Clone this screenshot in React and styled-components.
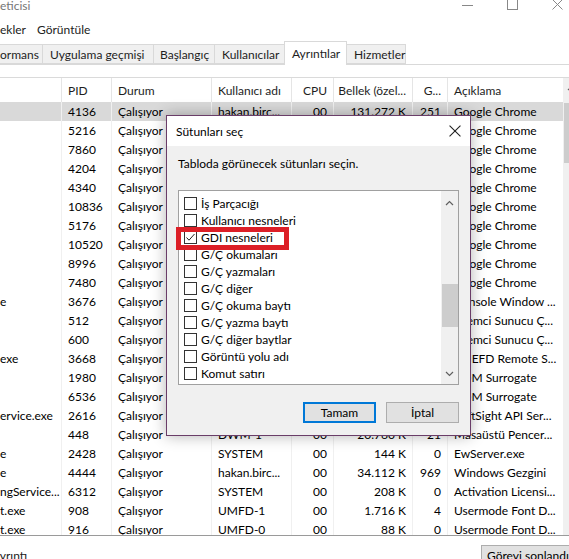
import React from 'react'
import styled, { createGlobalStyle } from 'styled-components'

const PageStyle = createGlobalStyle`
  html, body {
    margin: 0;
    padding: 0;
    background: #fff;
  }
  body {
    font-family: Lato, 'Noto Sans', sans-serif;
    font-size: 12px;
    color: #000;
    overflow: hidden;
  }
`

const Window = styled.div`
  position: relative;
  width: 569px;
  height: 559px;
  overflow: hidden;
  background: #fff;
  display: flex;
  flex-direction: column;
  & > * {
    flex-shrink: 0;
  }
`

const TitleBar = styled.div`
  height: 12px;
  display: flex;
  align-items: center;
  justify-content: space-between;
`
const Title = styled.span`
  color: #767676;
  line-height: 12px;
  margin-top: -1px;
`
const Controls = styled.div`
  display: flex;
  align-items: center;
  height: 12px;
  margin-top: -3px;
  margin-right: 6px;
  gap: 34px;
`

const MenuBar = styled.div`
  height: 29px;
  display: flex;
  align-items: flex-end;
  gap: 11px;
  padding-bottom: 3px;
  box-sizing: border-box;
`
const MenuItem = styled.span`
  line-height: 16px;
  color: #222;
`

const TabBar = styled.div`
  height: 24px;
  display: flex;
  align-items: flex-end;
  border-bottom: 1px solid #d9d9d9;
  box-sizing: border-box;
  margin-left: -1px;
`
const Tab = styled.div`
  width: ${(p) => p.w}px;
  box-sizing: border-box;
  height: ${(p) => (p.active ? 24 : 20)}px;
  margin-bottom: ${(p) => (p.active ? -1 : 0)}px;
  padding: 0 0 0 ${(p) => p.pad || 7}px;
  display: flex;
  align-items: center;
  background: ${(p) => (p.active ? '#fff' : '#f0f0f0')};
  border: 1px solid #d9d9d9;
  border-bottom: ${(p) => (p.active ? 'none' : '1px solid #d9d9d9')};
  margin-left: -1px;
  color: #1e1e1e;
  white-space: nowrap;
  position: ${(p) => (p.active ? 'relative' : 'static')};
  z-index: ${(p) => (p.active ? 1 : 0)};
`

const TableWrap = styled.div`
  margin-top: 12px;
  display: flex;
  border-top: 1px solid #dadada;
  border-bottom: 1px solid #9a9a9a;
  height: 457px;
  box-sizing: content-box;
`
const Table = styled.div`
  width: 563px;
  flex: 0 0 563px;
  display: flex;
  flex-direction: column;
  overflow: hidden;
`
const cols = '62px 50px 100px 80px 42px 79px 35px 1fr'

const HeaderRow = styled.div`
  display: grid;
  grid-template-columns: ${cols};
  height: 24px;
  flex: 0 0 24px;
`
const HeadCell = styled.div`
  display: flex;
  align-items: center;
  justify-content: ${(p) => (p.right ? 'flex-end' : 'flex-start')};
  padding: 0 ${(p) => (p.right ? 6 : 0)}px 0 ${(p) => (p.right ? 0 : 6)}px;
  border-right: 1px solid #e5e5e5;
  color: #1e1e1e;
  white-space: nowrap;
  overflow: hidden;
  &:last-child {
    border-right: none;
  }
`
const Row = styled.div`
  display: grid;
  grid-template-columns: ${cols};
  height: 19px;
  flex: 0 0 19px;
  background: ${(p) => (p.selected ? '#d9d9d9' : 'transparent')};
`
const Cell = styled.div`
  display: flex;
  align-items: center;
  justify-content: ${(p) => (p.right ? 'flex-end' : 'flex-start')};
  padding: 0 ${(p) => (p.right ? 6 : 0)}px 0 ${(p) => (p.right ? 0 : p.first ? 0 : 6)}px;
  border-right: 1px solid #f0f0f0;
  white-space: nowrap;
  overflow: hidden;
  &:last-child {
    border-right: none;
  }
`

const ScrollTrack = styled.div`
  width: 17px;
  flex: 0 0 17px;
  background: #f0f0f0;
  display: flex;
  flex-direction: column;
  align-items: center;
`
const ScrollArrow = styled.div`
  height: ${(p) => p.h || 17}px;
  flex: 0 0 ${(p) => p.h || 17}px;
  width: 17px;
  display: flex;
  align-items: center;
  justify-content: center;
`
const ScrollThumb = styled.div`
  width: ${(p) => p.w || 15}px;
  height: ${(p) => p.h}px;
  flex: 0 0 ${(p) => p.h}px;
  margin-top: ${(p) => p.top}px;
  background: #cdcdcd;
`
const ScrollGap = styled.div`
  flex: 1;
`

const Footer = styled.div`
  height: 23px;
  overflow: hidden;
  display: flex;
  justify-content: space-between;
  align-items: flex-start;
  padding-top: 9px;
  box-sizing: border-box;
`
const LessDetail = styled.span`
  margin-left: -6px;
  margin-top: 3px;
  line-height: 16px;
  color: #222;
`
const Button = styled.button`
  font-family: inherit;
  font-size: 12px;
  color: #000;
  height: 21px;
  width: ${(p) => p.w}px;
  padding: 0;
  background: #e1e1e1;
  border: ${(p) => (p.focused ? '2px solid #0078d7' : '1px solid #adadad')};
  box-sizing: border-box;
  text-align: ${(p) => (p.left ? 'left' : 'center')};
  padding-left: ${(p) => (p.left ? 5 : 0)}px;
  flex-shrink: 0;
`
const EndTaskButton = styled(Button)`
  margin-right: -12px;
`

/* dialog */
const Dialog = styled.div`
  position: absolute;
  left: 166px;
  top: 115px;
  width: 305px;
  height: 321px;
  box-sizing: border-box;
  border: 1px solid #6a3d68;
  background: #f0f0f0;
  box-shadow: 0 0 14px rgba(0, 0, 0, 0.3);
  display: flex;
  flex-direction: column;
`
const DialogTitle = styled.div`
  height: 30px;
  flex: 0 0 30px;
  background: #fff;
  display: flex;
  align-items: center;
  justify-content: space-between;
  padding: 0 9px 0 9px;
`
const DialogBody = styled.div`
  padding: 10px 11px 0 11px;
  display: flex;
  flex-direction: column;
`
const Prompt = styled.div`
  line-height: 16px;
  color: #000;
`
const ListBox = styled.div`
  margin-top: 18px;
  height: 195px;
  border: 1px solid #a0a0a0;
  box-sizing: border-box;
  background: #fff;
  display: flex;
  overflow: hidden;
`
const ListItems = styled.div`
  flex: 1;
  padding: 4px 0 0 5px;
`
const Item = styled.div`
  height: 17px;
  display: flex;
  align-items: center;
  gap: 4px;
  white-space: nowrap;
`
const Box = styled.span`
  width: 13px;
  height: 13px;
  box-sizing: border-box;
  border: 1px solid #333;
  background: #fff;
  display: inline-flex;
  align-items: center;
  justify-content: center;
  flex-shrink: 0;
`
const ButtonRow = styled.div`
  margin-top: 17px;
  display: flex;
  justify-content: flex-end;
  gap: 10px;
`
const Highlight = styled.div`
  position: absolute;
  left: 9px;
  top: 111px;
  width: 113px;
  height: 23px;
  box-sizing: border-box;
  border: 5px solid #dc1f27;
`

const Chevron = ({ down }) => (
  <svg width='9' height='6' viewBox='0 0 9 6'>
    <path d={down ? 'M1 1 L4.5 4.5 L8 1' : 'M1 5 L4.5 1.5 L8 5'} fill='none' stroke='#606060' strokeWidth='1.2' />
  </svg>
)

const Check = () => (
  <svg width='11' height='11' viewBox='0 0 11 11'>
    <path d='M1.5 5.5 L4 8.2 L9.5 2' fill='none' stroke='#222' strokeWidth='1' />
  </svg>
)

const CloseX = ({ size = 11, color = '#333' }) => (
  <svg width={size} height={size} viewBox='0 0 11 11'>
    <path d='M0.5 0.5 L10.5 10.5 M10.5 0.5 L0.5 10.5' stroke={color} strokeWidth='1' />
  </svg>
)

const rows = [
  ['', '4136', 'hakan.birc...', '00', '131.272 K', '251', 'Google Chrome'],
  ['', '5216', 'hakan.birc...', '00', '52.180 K', '12', 'Google Chrome'],
  ['', '7860', 'hakan.birc...', '00', '3.412 K', '8', 'Google Chrome'],
  ['', '4204', 'hakan.birc...', '00', '88.904 K', '34', 'Google Chrome'],
  ['', '4340', 'hakan.birc...', '00', '21.600 K', '6', 'Google Chrome'],
  ['', '10836', 'hakan.birc...', '00', '40.112 K', '6', 'Google Chrome'],
  ['', '5176', 'hakan.birc...', '00', '17.244 K', '6', 'Google Chrome'],
  ['', '10520', 'hakan.birc...', '00', '25.380 K', '6', 'Google Chrome'],
  ['', '8996', 'hakan.birc...', '00', '9.816 K', '6', 'Google Chrome'],
  ['', '7480', 'hakan.birc...', '00', '12.052 K', '6', 'Google Chrome'],
  ['e', '3676', 'hakan.birc...', '00', '1.204 K', '0', 'Console Window ...'],
  ['', '512', 'SYSTEM', '00', '1.108 K', '0', 'İstemci Sunucu Ç...'],
  ['', '600', 'SYSTEM', '00', '1.260 K', '12', 'İstemci Sunucu Ç...'],
  ['exe', '3668', 'SYSTEM', '00', '2.004 K', '0', 'SMEFD Remote S...'],
  ['', '1980', 'hakan.birc...', '00', '3.040 K', '2', 'COM Surrogate'],
  ['', '6536', 'hakan.birc...', '00', '1.520 K', '0', 'COM Surrogate'],
  ['ervice.exe', '2616', 'SYSTEM', '00', '6.344 K', '0', 'SoftSight API Ser...'],
  ['', '448', 'DWM-1', '00', '20.760 K', '21', 'Masaüstü Pencer...'],
  ['e', '2428', 'SYSTEM', '00', '144 K', '0', 'EwServer.exe'],
  ['e', '4444', 'hakan.birc...', '00', '34.112 K', '969', 'Windows Gezgini'],
  ['ngService...', '6312', 'SYSTEM', '00', '208 K', '0', 'Activation Licensi...'],
  ['t.exe', '908', 'UMFD-1', '00', '1.716 K', '4', 'Usermode Font D...'],
  ['t.exe', '916', 'UMFD-0', '00', '88 K', '0', 'Usermode Font D...'],
]

const columns = [
  { label: '' },
  { label: 'PID' },
  { label: 'Durum' },
  { label: 'Kullanıcı adı' },
  { label: 'CPU', right: true },
  { label: 'Bellek (özel...', right: true },
  { label: 'G...', right: true },
  { label: 'Açıklama' },
]

const options = [
  ['İş Parçacığı', false],
  ['Kullanıcı nesneleri', false],
  ['GDI nesneleri', true],
  ['G/Ç okumaları', false],
  ['G/Ç yazmaları', false],
  ['G/Ç diğer', false],
  ['G/Ç okuma baytı', false],
  ['G/Ç yazma baytı', false],
  ['G/Ç diğer baytlar', false],
  ['Görüntü yolu adı', false],
  ['Komut satırı', false],
  ['İşlem', false],
]

const ColumnsDialog = () => (
  <Dialog>
    <DialogTitle>
      <span>Sütunları seç</span>
      <CloseX size={12} color='#222' />
    </DialogTitle>
    <DialogBody>
      <Prompt>Tabloda görünecek sütunları seçin.</Prompt>
      <ListBox>
        <ListItems>
          {options.map(([label, checked]) => (
            <Item key={label}>
              <Box>{checked && <Check />}</Box>
              <span>{label}</span>
            </Item>
          ))}
        </ListItems>
        <ScrollTrack>
          <ScrollArrow h={24}>
            <Chevron />
          </ScrollArrow>
          <ScrollThumb w={16} h={43} top={69} />
          <ScrollGap />
          <ScrollArrow h={21}>
            <Chevron down />
          </ScrollArrow>
        </ScrollTrack>
      </ListBox>
      <ButtonRow>
        <Button w={73} focused>Tamam</Button>
        <Button w={73}>İptal</Button>
      </ButtonRow>
    </DialogBody>
    <Highlight />
  </Dialog>
)

const App = () => (
  <Window>
    <PageStyle />
    <TitleBar>
      <Title>eticisi</Title>
      <Controls>
        <svg width='11' height='11' viewBox='0 0 11 11'>
          <path d='M0 6.5 H11' stroke='#888' strokeWidth='1' />
        </svg>
        <svg width='11' height='11' viewBox='0 0 11 11'>
          <rect x='0.5' y='0.5' width='10' height='10' fill='none' stroke='#888' strokeWidth='1' />
        </svg>
        <CloseX size={11} color='#888' />
      </Controls>
    </TitleBar>
    <MenuBar>
      <MenuItem>ekler</MenuItem>
      <MenuItem>Görüntüle</MenuItem>
    </MenuBar>
    <TabBar>
      <Tab w={45} pad={1}>ormans</Tab>
      <Tab w={112}>Uygulama geçmişi</Tab>
      <Tab w={62} pad={6}>Başlangıç</Tab>
      <Tab w={71}>Kullanıcılar</Tab>
      <Tab w={63} active>Ayrıntılar</Tab>
      <Tab w={60}>Hizmetler</Tab>
    </TabBar>
    <TableWrap>
      <Table>
        <HeaderRow>
          {columns.map((c, i) => (
            <HeadCell key={i} right={c.right}>{c.label}</HeadCell>
          ))}
        </HeaderRow>
        {rows.map((r, i) => (
          <Row key={i} selected={i === 0}>
            <Cell first>{r[0]}</Cell>
            <Cell>{r[1]}</Cell>
            <Cell>Çalışıyor</Cell>
            <Cell>{r[2]}</Cell>
            <Cell right>{r[3]}</Cell>
            <Cell right>{r[4]}</Cell>
            <Cell right>{r[5]}</Cell>
            <Cell>{r[6]}</Cell>
          </Row>
        ))}
      </Table>
      <ScrollTrack>
        <ScrollArrow h={20}>
          <Chevron />
        </ScrollArrow>
        <ScrollThumb h={60} top={5} />
      </ScrollTrack>
    </TableWrap>
    <Footer>
      <LessDetail>ayrıntı</LessDetail>
      <EndTaskButton w={100} left>Görevi sonlandır</EndTaskButton>
    </Footer>
    <ColumnsDialog />
  </Window>
)

export default App
